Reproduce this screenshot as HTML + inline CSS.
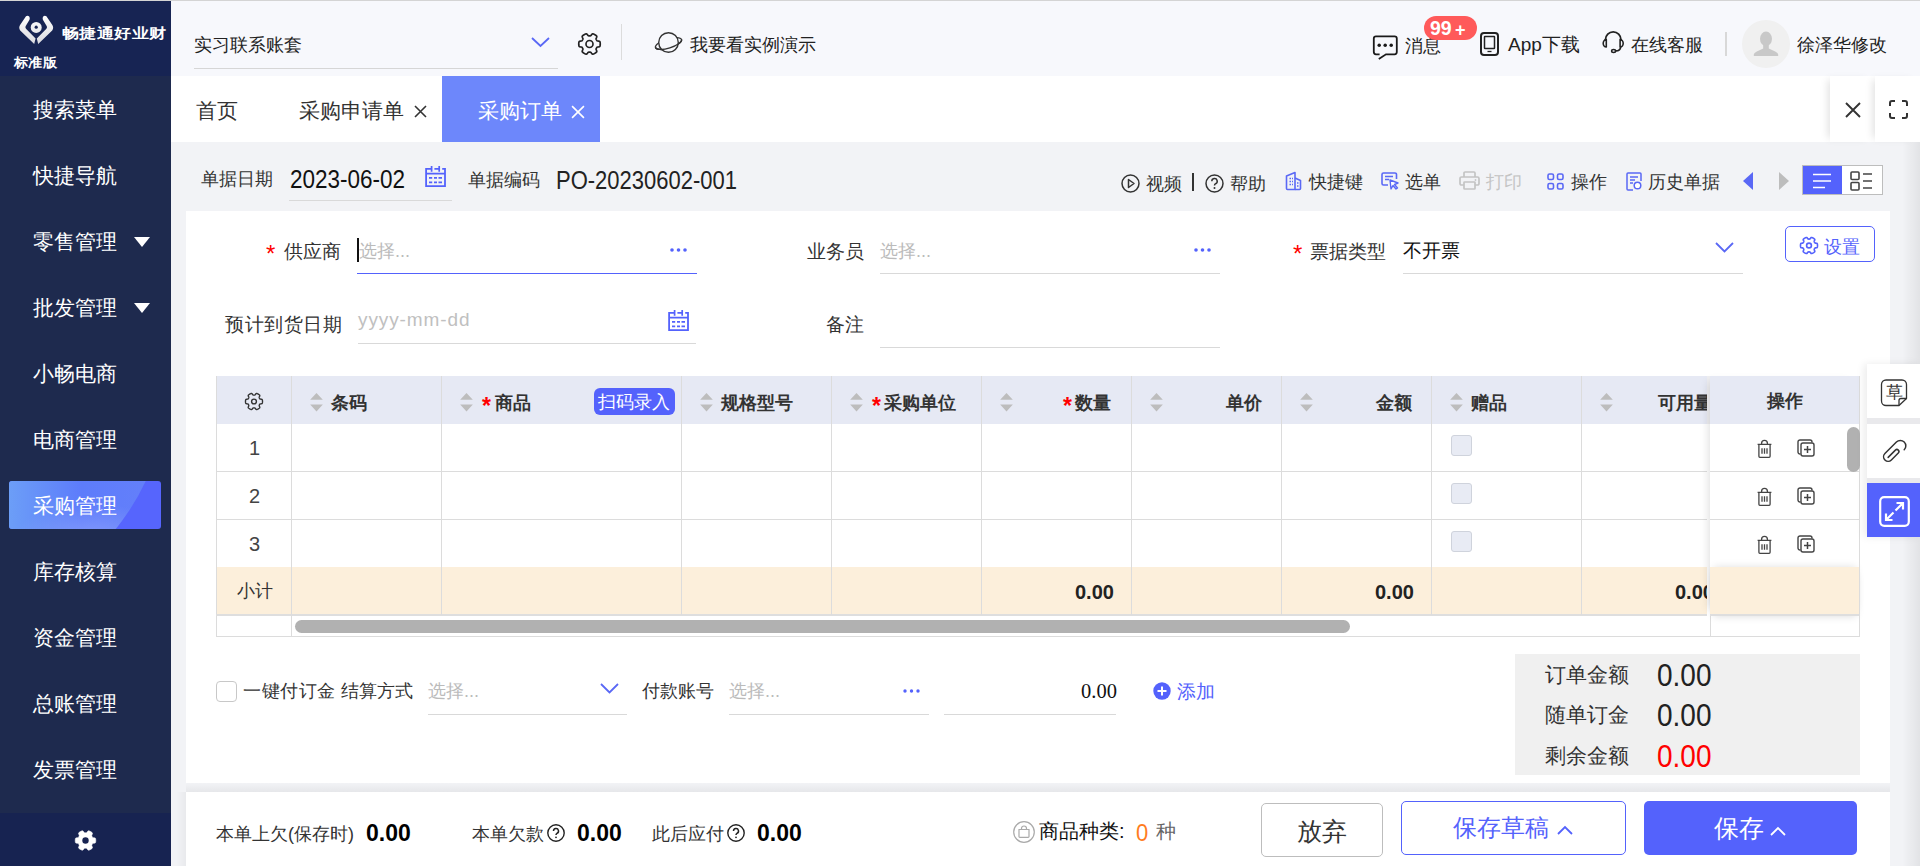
<!DOCTYPE html>
<html><head><meta charset="utf-8">
<style>
*{margin:0;padding:0;box-sizing:border-box}
html,body{width:1920px;height:866px;overflow:hidden}
body{position:relative;background:#f2f3f6;font-family:"Liberation Sans",sans-serif;color:#333}
.a{position:absolute;white-space:nowrap}
svg{display:block;overflow:visible}
/* sidebar */
#side{left:0;top:0;width:171px;height:866px;background:#1e2a4e}
#logo{left:0;top:1px;width:171px;height:75px;background:#172453}
#sidebot{left:0;top:813px;width:171px;height:53px;background:#172351}
.mi{left:33px;color:#fff;font-size:21px;line-height:30px}
.tri{width:0;height:0;border-left:8.5px solid transparent;border-right:8.5px solid transparent;border-top:10px solid #fff}
#act{left:9px;top:481px;width:152px;height:48px;border-radius:3px;overflow:hidden;background:#5665fd}
#actc{left:-313px;top:-336px;width:472px;height:472px;border-radius:50%;
 background:radial-gradient(ellipse 80px 40px at 395px 398px,rgba(150,168,250,.75),rgba(150,168,250,0)),linear-gradient(90deg,#6c9ef7 313px,#5d7cfb 385px,#6580fa 465px)}
/* header */
#hdr{left:171px;top:1px;width:1749px;height:75px;background:#f7f8fc}
.ht{font-size:18px;line-height:24px;color:#222}
/* tabs */
#tabs{left:171px;top:76px;width:1749px;height:66px;background:#fff}
.tab{font-size:21px;line-height:30px;color:#333}
/* toolbar */
.tb{font-size:18px;line-height:24px;color:#333}
/* card */
#card{left:186px;top:211px;width:1704px;height:572px;background:#fff}
.lbl{font-size:19px;line-height:26px;color:#333}
.ph{font-size:18px;line-height:26px;color:#bbb}
.ul{height:1px;background:#d9d9d9}
.req{color:#f00;font-size:23px;line-height:20px;font-weight:bold}
/* table */
.th{font-size:18px;line-height:24px;color:#333;font-weight:bold}
.vl{width:1px;background:#dcdcdc}
.hl{height:1px;background:#dcdcdc}
.sort{width:13px;height:19px}
.cb{width:21px;height:21px;border:1px solid #cfd3dc;border-radius:3px;background:#e8ebf4}
.num{font-size:20px;line-height:24px;font-weight:bold;color:#222}
/* footer */
#foot{left:186px;top:792px;width:1704px;height:74px;background:#fff}
.ft{font-size:18px;line-height:24px;color:#333}
.fv{font-size:23px;line-height:26px;margin-top:2px;font-weight:bold;color:#000;transform:scaleY(1.06);transform-origin:0 20px}
</style></head>
<body>
<svg width="0" height="0" style="position:absolute"><defs><path id="gearp" d="M24.65 13.00 L24.64 13.51 L24.60 14.02 L24.54 14.52 L24.45 15.02 L24.28 15.50 L23.85 15.91 L22.88 16.12 L21.82 16.21 L21.26 16.42 L20.98 16.72 L20.77 17.04 L20.58 17.38 L20.39 17.71 L20.21 18.05 L20.09 18.44 L20.19 19.03 L20.64 20.00 L20.94 20.94 L20.80 21.52 L20.47 21.91 L20.09 22.24 L19.68 22.54 L19.26 22.83 L18.83 23.09 L18.38 23.33 L17.92 23.56 L17.46 23.76 L16.98 23.93 L16.47 24.02 L15.91 23.85 L15.24 23.11 L14.63 22.25 L14.17 21.87 L13.77 21.77 L13.38 21.75 L13.00 21.75 L12.62 21.75 L12.23 21.77 L11.83 21.87 L11.37 22.25 L10.76 23.11 L10.09 23.85 L9.53 24.02 L9.02 23.93 L8.54 23.76 L8.08 23.56 L7.62 23.33 L7.18 23.09 L6.74 22.83 L6.32 22.54 L5.91 22.24 L5.53 21.91 L5.20 21.52 L5.06 20.94 L5.36 20.00 L5.81 19.03 L5.91 18.44 L5.79 18.05 L5.61 17.71 L5.42 17.38 L5.23 17.04 L5.02 16.72 L4.74 16.42 L4.18 16.21 L3.12 16.12 L2.15 15.91 L1.72 15.50 L1.55 15.02 L1.46 14.52 L1.40 14.02 L1.36 13.51 L1.35 13.00 L1.36 12.49 L1.40 11.98 L1.46 11.48 L1.55 10.98 L1.72 10.50 L2.15 10.09 L3.12 9.88 L4.18 9.79 L4.74 9.58 L5.02 9.28 L5.23 8.96 L5.42 8.62 L5.61 8.29 L5.79 7.95 L5.91 7.56 L5.81 6.97 L5.36 6.00 L5.06 5.06 L5.20 4.48 L5.53 4.09 L5.91 3.76 L6.32 3.46 L6.74 3.17 L7.17 2.91 L7.62 2.67 L8.08 2.44 L8.54 2.24 L9.02 2.07 L9.53 1.98 L10.09 2.15 L10.76 2.89 L11.37 3.75 L11.83 4.13 L12.23 4.23 L12.62 4.25 L13.00 4.25 L13.38 4.25 L13.77 4.23 L14.17 4.13 L14.63 3.75 L15.24 2.89 L15.91 2.15 L16.47 1.98 L16.98 2.07 L17.46 2.24 L17.92 2.44 L18.38 2.67 L18.82 2.91 L19.26 3.17 L19.68 3.46 L20.09 3.76 L20.47 4.09 L20.80 4.48 L20.94 5.06 L20.64 6.00 L20.19 6.97 L20.09 7.56 L20.21 7.95 L20.39 8.29 L20.58 8.63 L20.77 8.96 L20.98 9.28 L21.26 9.58 L21.82 9.79 L22.88 9.88 L23.85 10.09 L24.28 10.50 L24.45 10.98 L24.54 11.48 L24.60 11.98 L24.64 12.49Z"/></defs></svg>
<!-- ============ SIDEBAR ============ -->
<div id="side" class="a"></div>
<div id="logo" class="a"></div>
<div id="sidebot" class="a"></div>
<div class="a" style="left:0;top:0;width:1920px;height:1px;background:#d4d4d4;z-index:5"></div>
<!-- logo icon -->
<svg class="a" style="left:0;top:0" width="60" height="50" viewBox="0 0 60 50">
 <defs><linearGradient id="lg" x1="0" y1="15" x2="0" y2="45" gradientUnits="userSpaceOnUse"><stop offset="0" stop-color="#fff"/><stop offset="1" stop-color="#d9d9de"/></linearGradient></defs>
 <path d="M26 16.2 Q27.8 15 29.2 16.5 Q30.2 18 29.5 19.8 L25.6 26.2 Q25 27.6 26 28.8 L35.6 38.4 L34.2 44 L20.2 30.6 Q18.2 27.4 20.4 24.6 Z" fill="url(#lg)"/>
 <path d="M46.4 16.2 Q44.6 15 43.2 16.5 Q42.2 18 42.9 19.8 L46.8 26.2 Q47.4 27.6 46.4 28.8 L36.8 38.4 L38.2 44 L52.2 30.6 Q54.2 27.4 52 24.6 Z" fill="url(#lg)"/>
 <circle cx="36.2" cy="27.4" r="5.5" fill="url(#lg)"/>
 <circle cx="36.2" cy="27.2" r="1.6" fill="#172453"/>
</svg>
<div class="a" style="left:62px;top:24px;font-size:17.5px;line-height:22px;color:#fff;font-weight:bold;letter-spacing:-0.6px;transform:scaleY(0.82);transform-origin:0 0">畅捷通好业财</div>
<div class="a" style="left:14px;top:53px;font-size:14px;line-height:20px;color:#fff;font-weight:bold;letter-spacing:0.3px;transform:scaleY(0.92);transform-origin:0 0">标准版</div>

<div id="act" class="a"><div id="actc" class="a"></div></div>
<div class="a mi" style="top:95px">搜索菜单</div>
<div class="a mi" style="top:161px">快捷导航</div>
<div class="a mi" style="top:227px">零售管理</div>
<div class="a mi" style="top:293px">批发管理</div>
<div class="a mi" style="top:359px">小畅电商</div>
<div class="a mi" style="top:425px">电商管理</div>
<div class="a mi" style="top:491px">采购管理</div>
<div class="a mi" style="top:557px">库存核算</div>
<div class="a mi" style="top:623px">资金管理</div>
<div class="a mi" style="top:689px">总账管理</div>
<div class="a mi" style="top:755px">发票管理</div>
<div class="a tri" style="left:134px;top:237px"></div>
<div class="a tri" style="left:134px;top:303px"></div>
<!-- bottom gear -->
<svg class="a" style="left:74px;top:829px" width="23" height="23" viewBox="0 0 26 26">
 <use href="#gearp" fill="#fff" stroke="#fff" stroke-width="0.6"/>
 <circle cx="13" cy="13" r="3.6" fill="#172351"/>
</svg>

<!-- ============ HEADER ============ -->
<div id="hdr" class="a"></div>
<div class="a ht" style="left:194px;top:33px">实习联系账套</div>
<div class="a" style="left:194px;top:68px;width:364px;height:1px;background:#d6d6d6"></div>
<svg class="a" style="left:531px;top:37px" width="19" height="10" viewBox="0 0 19 10"><path d="M1 1 L9.5 9 L18 1" fill="none" stroke="#5a68f5" stroke-width="1.8"/></svg>
<svg class="a" style="left:577px;top:32px" width="25" height="24" viewBox="0 0 26 26">
 <use href="#gearp" fill="none" stroke="#222" stroke-width="1.8" stroke-linejoin="round"/>
 <circle cx="13" cy="13" r="3.8" fill="none" stroke="#222" stroke-width="1.8"/>
</svg>
<div class="a" style="left:621px;top:24px;width:1px;height:36px;background:#dcdcdc"></div>
<svg class="a" style="left:654px;top:31px" width="30" height="24" viewBox="0 0 30 24">
 <g transform="translate(14.5 12.5) rotate(-17)"><ellipse cx="0" cy="0" rx="13.6" ry="4.6" fill="none" stroke="#333" stroke-width="1.4"/></g>
 <circle cx="14.5" cy="11.5" r="9.8" fill="#f7f8fc" stroke="#333" stroke-width="1.4"/>
 <g transform="translate(14.5 12.5) rotate(-17)"><path d="M-13.6 0 A13.6 4.6 0 0 0 13.6 0" fill="none" stroke="#333" stroke-width="1.4"/></g>
</svg>
<div class="a ht" style="left:690px;top:33px">我要看实例演示</div>

<!-- message -->
<svg class="a" style="left:1368px;top:30px" width="34" height="34" viewBox="1368 30 34 34">
 <path d="M1379.6 54.3 H1376 a2.2 2.2 0 0 1 -2.2 -2.2 V38.5 a2.2 2.2 0 0 1 2.2 -2.2 H1394.6 a2.2 2.2 0 0 1 2.2 2.2 V52.1 a2.2 2.2 0 0 1 -2.2 2.2 H1386 L1378.8 59" fill="none" stroke="#1a1a1a" stroke-width="1.8"/>
 <circle cx="1379.2" cy="45.3" r="1.75" fill="#1a1a1a"/><circle cx="1385.2" cy="45.3" r="1.75" fill="#1a1a1a"/><circle cx="1391.2" cy="45.3" r="1.75" fill="#1a1a1a"/>
</svg>
<div class="a ht" style="left:1405px;top:34px">消息</div>
<div class="a" style="left:1424px;top:16px;width:53px;height:24px;border-radius:12px;background:#ff5a5a"></div><div class="a" style="left:1430px;top:16px;color:#fff;font-size:19.5px;line-height:24px;font-weight:bold">99</div><div class="a" style="left:1455px;top:17.5px;color:#fff;font-size:18px;line-height:24px;font-weight:bold">+</div>
<svg class="a" style="left:1480px;top:32px" width="19" height="24" viewBox="0 0 19 24">
 <rect x="1" y="1" width="17" height="22" rx="3" fill="none" stroke="#222" stroke-width="2"/>
 <rect x="4.5" y="4.5" width="10" height="12" rx="0.5" fill="none" stroke="#222" stroke-width="1.5"/>
 <line x1="7.5" y1="19.5" x2="11.5" y2="19.5" stroke="#222" stroke-width="1.3"/>
</svg>
<div class="a ht" style="left:1508px;top:33px;font-size:19px">App下载</div>
<svg class="a" style="left:1598px;top:28px" width="30" height="30" viewBox="1598 28 30 30">
 <path d="M1605.5 41 V39.6 A7.7 7.7 0 0 1 1620.9 39.6 V41" fill="none" stroke="#222" stroke-width="1.8"/>
 <path d="M1606.3 39.6 A3.1 3.7 0 0 0 1606.3 47 Z" fill="none" stroke="#222" stroke-width="1.6" stroke-linejoin="round"/>
 <path d="M1620.1 39.6 A3.1 3.7 0 0 1 1620.1 47 Z" fill="none" stroke="#222" stroke-width="1.6" stroke-linejoin="round"/>
 <path d="M1620.6 47 C1620.6 49.6 1618.6 50.9 1615.6 50.9" fill="none" stroke="#222" stroke-width="1.6"/>
 <ellipse cx="1613.6" cy="50.9" rx="2" ry="1.5" fill="none" stroke="#222" stroke-width="1.5"/>
</svg>
<div class="a ht" style="left:1631px;top:33px">在线客服</div>
<div class="a" style="left:1725px;top:32px;width:2px;height:24px;background:#d8d8d8"></div>
<svg class="a" style="left:1742px;top:20px" width="48" height="48" viewBox="0 0 48 48"><circle cx="24" cy="24" r="24" fill="#f0f0f0"/>
 <ellipse cx="24" cy="18.8" rx="6" ry="7.2" fill="#c8c8c8"/>
 <path d="M21.2 24 V28.6 L14.8 31.6 Q11.8 33 11.8 34.6 V36 H36.2 V34.6 Q36.2 33 33.2 31.6 L26.8 28.6 V24 Z" fill="#c8c8c8"/>
</svg>
<div class="a ht" style="left:1797px;top:33px">徐泽华修改</div>

<!-- ============ TABS ============ -->
<div id="tabs" class="a"></div>
<div class="a tab" style="left:196px;top:96px">首页</div>
<div class="a tab" style="left:299px;top:96px">采购申请单</div>
<svg class="a" style="left:414px;top:105px" width="13" height="13" viewBox="0 0 13 13"><path d="M1 1 L12 12 M12 1 L1 12" stroke="#333" stroke-width="1.6"/></svg>
<div class="a" style="left:442px;top:76px;width:158px;height:66px;background:#6d87fb"></div>
<div class="a tab" style="left:478px;top:96px;color:#fff">采购订单</div>
<svg class="a" style="left:571px;top:105px" width="14" height="14" viewBox="0 0 13 13"><path d="M1 1 L12 12 M12 1 L1 12" stroke="#fff" stroke-width="1.5"/></svg>
<div class="a" style="left:1830px;top:76px;width:45px;height:66px;background:#fff;box-shadow:-6px 0 8px -4px rgba(0,0,0,.12)"></div>
<div class="a" style="left:1875px;top:76px;width:45px;height:66px;background:#fff;box-shadow:-6px 0 8px -4px rgba(0,0,0,.12)"></div>
<svg class="a" style="left:1845px;top:102px" width="16" height="16" viewBox="0 0 16 16"><path d="M1 1 L15 15 M15 1 L1 15" stroke="#333" stroke-width="1.9"/></svg>
<svg class="a" style="left:1889px;top:100px" width="19" height="19" viewBox="0 0 19 19"><path d="M1 6 V3 a2 2 0 0 1 2 -2 H6 M13 1 H16 a2 2 0 0 1 2 2 V6 M18 13 V16 a2 2 0 0 1 -2 2 H13 M6 18 H3 a2 2 0 0 1 -2 -2 V13" fill="none" stroke="#333" stroke-width="2"/></svg>

<!-- ============ TOOLBAR ============ -->
<div class="a tb" style="left:201px;top:167px">单据日期</div>
<div class="a" style="left:290px;top:168px;font-size:22.5px;line-height:26px;color:#111;transform:scaleY(1.13);transform-origin:0 19px">2023-06-02</div>
<div class="a" style="left:289px;top:200px;width:163px;height:1px;background:#d9d9d9"></div>
<svg class="a" style="left:420px;top:160px" width="32" height="32" viewBox="0 0 32 32"><g fill="none" stroke="#5462fc">
 <path d="M11.6 8.9 H6.1 V26.1 H25 V8.9 H22.2 M14.4 8.9 H19.2 M6.1 13.7 H25" stroke-width="1.8"/>
 <path d="M11.6 6.1 V11.8 M19.2 6.1 V11.8" stroke-width="1.7"/>
 <path d="M9 17.9 H12.2 M14 17.9 H17 M18.5 17.9 H22 M9 22.4 H12.2 M14 22.4 H17 M18.5 22.4 H22" stroke-width="1.7"/>
</g></svg>
<div class="a tb" style="left:468px;top:168px">单据编码</div>
<div class="a" style="left:556px;top:169px;font-size:22px;line-height:26px;color:#222;transform:scaleY(1.13);transform-origin:0 19px">PO-20230602-001</div>

<!-- right toolbar -->
<svg class="a" style="left:1121px;top:174px" width="19" height="19" viewBox="0 0 19 19"><circle cx="9.5" cy="9.5" r="8.5" fill="none" stroke="#333" stroke-width="1.5"/><path d="M7.5 5.5 L13 9.5 L7.5 13.5Z" fill="none" stroke="#333" stroke-width="1.5" stroke-linejoin="round"/></svg>
<div class="a tb" style="left:1146px;top:172px">视频</div>
<div class="a" style="left:1192px;top:173px;width:2px;height:18px;background:#333"></div>
<svg class="a" style="left:1205px;top:174px" width="19" height="19" viewBox="0 0 19 19"><circle cx="9.5" cy="9.5" r="8.5" fill="none" stroke="#333" stroke-width="1.5"/><path d="M6.8 7.3 a2.7 2.7 0 1 1 3.8 2.4 C9.8 10.1 9.5 10.6 9.5 11.6" fill="none" stroke="#333" stroke-width="1.5"/><circle cx="9.5" cy="14" r="1" fill="#333"/></svg>
<div class="a tb" style="left:1230px;top:172px">帮助</div>
<svg class="a" style="left:1285px;top:171px" width="17" height="20" viewBox="0 0 17 20">
 <path d="M1.5 5 L10 1.5 V18.5 H2.5 a1 1 0 0 1 -1 -1Z" fill="none" stroke="#5a68f5" stroke-width="1.6" stroke-linejoin="round"/>
 <path d="M10 7 L15.5 9.5 V17.5 a1 1 0 0 1 -1 1 H10" fill="none" stroke="#5a68f5" stroke-width="1.6" stroke-linejoin="round"/>
 <path d="M4.5 7.5 h1.5 M7 7.5 h1 M4.5 10.5 h1.5 M7 10.5 h1 M4.5 13.5 h1.5 M7 13.5 h1 M12 12 h1.5 M12 15 h1.5" stroke="#5a68f5" stroke-width="1.5"/>
</svg>
<div class="a tb" style="left:1309px;top:170px">快捷键</div>
<svg class="a" style="left:1381px;top:172px" width="18" height="18" viewBox="0 0 18 18">
 <path d="M7 13 H2.5 a1.5 1.5 0 0 1 -1.5 -1.5 V2.5 A1.5 1.5 0 0 1 2.5 1 H14 a1.5 1.5 0 0 1 1.5 1.5 V7" fill="none" stroke="#5a68f5" stroke-width="1.6"/>
 <path d="M4 4.5 H12 M4 7.5 H8" stroke="#5a68f5" stroke-width="1.5"/>
 <path d="M9 8 L17 11 L13.5 12.5 L16.5 16 L15 17 L12 13.5 L10 17Z" fill="#fff" stroke="#5a68f5" stroke-width="1.4" stroke-linejoin="round"/>
</svg>
<div class="a tb" style="left:1405px;top:170px">选单</div>
<svg class="a" style="left:1459px;top:171px" width="21" height="19" viewBox="0 0 21 19">
 <path d="M5 6 V2 a1 1 0 0 1 1 -1 H15 a1 1 0 0 1 1 1 V6" fill="none" stroke="#c4c4c4" stroke-width="1.7"/>
 <path d="M5 14 H2.5 a1.5 1.5 0 0 1 -1.5 -1.5 V7.5 A1.5 1.5 0 0 1 2.5 6 H18.5 A1.5 1.5 0 0 1 20 7.5 V12.5 A1.5 1.5 0 0 1 18.5 14 H16" fill="none" stroke="#c4c4c4" stroke-width="1.7"/>
 <rect x="5" y="11" width="11" height="7" rx="0.5" fill="none" stroke="#c4c4c4" stroke-width="1.7"/>
 <circle cx="16.5" cy="9" r="0.9" fill="#c4c4c4"/>
</svg>
<div class="a tb" style="left:1486px;top:170px;color:#c4c4c4">打印</div>
<svg class="a" style="left:1547px;top:173px" width="17" height="17" viewBox="0 0 17 17">
 <rect x="1" y="1" width="5.5" height="5.5" rx="1.5" fill="none" stroke="#5a68f5" stroke-width="1.6"/>
 <rect x="10.5" y="1" width="5.5" height="5.5" rx="1.5" fill="none" stroke="#5a68f5" stroke-width="1.6"/>
 <rect x="1" y="10.5" width="5.5" height="5.5" rx="1.5" fill="none" stroke="#5a68f5" stroke-width="1.6"/>
 <rect x="10.5" y="10.5" width="5.5" height="5.5" rx="1.5" fill="none" stroke="#5a68f5" stroke-width="1.6"/>
</svg>
<div class="a tb" style="left:1571px;top:170px">操作</div>
<svg class="a" style="left:1626px;top:172px" width="16" height="19" viewBox="0 0 16 19">
 <path d="M7 18 H2 a1 1 0 0 1 -1 -1 V2 a1 1 0 0 1 1 -1 H14 a1 1 0 0 1 1 1 V9" fill="none" stroke="#5a68f5" stroke-width="1.5"/>
 <path d="M4 5 H12 M4 8 H9 M4 11 H7" stroke="#5a68f5" stroke-width="1.5"/>
 <circle cx="11.5" cy="13.5" r="3.3" fill="#fff" stroke="#5a68f5" stroke-width="1.5"/>
</svg>
<div class="a tb" style="left:1648px;top:170px">历史单据</div>
<div class="a" style="left:1743px;top:172px;width:0;height:0;border-top:9px solid transparent;border-bottom:9px solid transparent;border-right:10px solid #5a68f5"></div>
<div class="a" style="left:1779px;top:172px;width:0;height:0;border-top:9px solid transparent;border-bottom:9px solid transparent;border-left:10px solid #bdbdbd"></div>
<div class="a" style="left:1802px;top:165px;width:81px;height:30px;border:1px solid #bdbdbd;background:#fff"></div>
<div class="a" style="left:1803px;top:166px;width:39px;height:28px;background:#5462fc"></div>
<svg class="a" style="left:1812px;top:173px" width="20" height="16" viewBox="0 0 20 16"><path d="M1 1.5 H19 M1 8 H19 M1 14.5 H13" stroke="#fff" stroke-width="1.6"/></svg>
<svg class="a" style="left:1850px;top:171px" width="24" height="20" viewBox="0 0 24 20">
 <rect x="1" y="1" width="8" height="7.5" rx="1" fill="none" stroke="#444" stroke-width="1.6"/>
 <rect x="1" y="11.5" width="8" height="7.5" rx="1" fill="none" stroke="#444" stroke-width="1.6"/>
 <path d="M13 3 H22 M13 10 H22 M13 17 H22" stroke="#444" stroke-width="1.6"/>
</svg>

<!-- right gray strip shadow -->
<div class="a" style="left:1902px;top:142px;width:18px;height:724px;background:linear-gradient(90deg,rgba(0,0,0,0),rgba(0,0,0,.065))"></div>

<!-- ============ CARD ============ -->
<div id="card" class="a"></div>

<!-- row1 -->
<div class="a req" style="left:266px;top:244px;font-weight:normal;font-size:24px">*</div>
<div class="a lbl" style="left:284px;top:239px">供应商</div>
<div class="a" style="left:357px;top:238px;width:2px;height:24px;background:#111"></div>
<div class="a ph" style="left:359px;top:238px">选择...</div>
<div class="a" style="left:357px;top:273px;width:340px;height:1px;background:#5462fc"></div>
<svg class="a" style="left:670px;top:248px" width="17" height="4" viewBox="0 0 17 4"><circle cx="2" cy="2" r="1.8" fill="#5462fc"/><circle cx="8.5" cy="2" r="1.8" fill="#5462fc"/><circle cx="15" cy="2" r="1.8" fill="#5462fc"/></svg>

<div class="a lbl" style="left:807px;top:239px">业务员</div>
<div class="a ph" style="left:880px;top:238px">选择...</div>
<div class="a ul" style="left:880px;top:273px;width:340px"></div>
<svg class="a" style="left:1194px;top:248px" width="17" height="4" viewBox="0 0 17 4"><circle cx="2" cy="2" r="1.8" fill="#5462fc"/><circle cx="8.5" cy="2" r="1.8" fill="#5462fc"/><circle cx="15" cy="2" r="1.8" fill="#5462fc"/></svg>

<div class="a req" style="left:1293px;top:244px;font-weight:normal;font-size:24px">*</div>
<div class="a lbl" style="left:1310px;top:239px">票据类型</div>
<div class="a lbl" style="left:1403px;top:238px;color:#111">不开票</div>
<div class="a ul" style="left:1403px;top:273px;width:340px"></div>
<svg class="a" style="left:1715px;top:242px" width="19" height="11" viewBox="0 0 19 11"><path d="M1 1 L9.5 9.5 L18 1" fill="none" stroke="#5a68f5" stroke-width="1.8"/></svg>

<div class="a" style="left:1785px;top:226px;width:90px;height:36px;border:1.5px solid #5462fc;border-radius:5px"></div>
<svg class="a" style="left:1799px;top:236px" width="20" height="19" viewBox="0 0 26 26">
 <use href="#gearp" fill="none" stroke="#5462fc" stroke-width="2.2" stroke-linejoin="round"/>
 <circle cx="13" cy="13" r="3.3" fill="none" stroke="#5462fc" stroke-width="2.2"/>
</svg>
<div class="a tb" style="left:1824px;top:235px;color:#5462fc">设置</div>

<!-- row2 -->
<div class="a lbl" style="left:225px;top:312px;letter-spacing:0.6px">预计到货日期</div>
<div class="a" style="left:358px;top:307px;font-size:19px;line-height:26px;color:#c0c0c0;letter-spacing:0.9px">yyyy-mm-dd</div>
<div class="a ul" style="left:358px;top:343px;width:338px"></div>
<svg class="a" style="left:663px;top:303.5px" width="32" height="32" viewBox="0 0 32 32"><g fill="none" stroke="#5462fc">
 <path d="M11.6 8.9 H6.1 V26.1 H25 V8.9 H22.2 M14.4 8.9 H19.2 M6.1 13.7 H25" stroke-width="1.8"/>
 <path d="M11.6 6.1 V11.8 M19.2 6.1 V11.8" stroke-width="1.7"/>
 <path d="M9 17.9 H12.2 M14 17.9 H17 M18.5 17.9 H22 M9 22.4 H12.2 M14 22.4 H17 M18.5 22.4 H22" stroke-width="1.7"/>
</g></svg>
<div class="a lbl" style="left:826px;top:312px">备注</div>
<div class="a ul" style="left:880px;top:347px;width:340px"></div>

<!-- ============ TABLE ============ -->
<div id="tbl" class="a" style="left:216px;top:376px;width:1644px;height:261px">
 <div class="a" style="left:0;top:0;width:1491px;height:48px;background:#e6e9f4"></div>
 <div class="a" style="left:0;top:191px;width:1491px;height:47px;background:#fcefdb"></div>
</div>
<!-- borders -->
<div class="a vl" style="left:216px;top:376px;height:261px"></div>
<div class="a hl" style="left:216px;top:471px;width:1491px"></div>
<div class="a hl" style="left:216px;top:519px;width:1491px"></div>
<div class="a hl" style="left:216px;top:614px;width:1491px;height:2px;background:#dedede"></div>
<div class="a hl" style="left:216px;top:636px;width:1644px"></div>
<div class="a vl" style="left:291px;top:376px;height:261px"></div>
<div class="a vl" style="left:441px;top:376px;height:239px"></div>
<div class="a vl" style="left:681px;top:376px;height:239px"></div>
<div class="a vl" style="left:831px;top:376px;height:239px"></div>
<div class="a vl" style="left:981px;top:376px;height:239px"></div>
<div class="a vl" style="left:1131px;top:376px;height:239px"></div>
<div class="a vl" style="left:1281px;top:376px;height:239px"></div>
<div class="a vl" style="left:1431px;top:376px;height:239px"></div>
<div class="a vl" style="left:1581px;top:376px;height:239px"></div>

<!-- header contents -->
<svg class="a" style="left:244px;top:392px" width="20" height="19" viewBox="0 0 26 26">
 <use href="#gearp" fill="none" stroke="#333" stroke-width="1.9" stroke-linejoin="round"/>
 <circle cx="13" cy="13" r="3.3" fill="none" stroke="#333" stroke-width="1.9"/>
</svg>
<!-- sort arrows -->
<svg width="0" height="0" style="position:absolute"><defs><g id="srt"><path d="M0 6.5 L6 0 L12 6.5Z M0 11 L6 17.5 L12 11Z" fill="#bdbdbd"/></g></defs></svg>
<svg class="a sort" style="left:309.5px;top:392.5px" viewBox="0 0 12 18"><use href="#srt"/></svg>
<svg class="a sort" style="left:459.5px;top:392.5px" viewBox="0 0 12 18"><use href="#srt"/></svg>
<svg class="a sort" style="left:699.5px;top:392.5px" viewBox="0 0 12 18"><use href="#srt"/></svg>
<svg class="a sort" style="left:849.5px;top:392.5px" viewBox="0 0 12 18"><use href="#srt"/></svg>
<svg class="a sort" style="left:999.5px;top:392.5px" viewBox="0 0 12 18"><use href="#srt"/></svg>
<svg class="a sort" style="left:1149.5px;top:392.5px" viewBox="0 0 12 18"><use href="#srt"/></svg>
<svg class="a sort" style="left:1299.5px;top:392.5px" viewBox="0 0 12 18"><use href="#srt"/></svg>
<svg class="a sort" style="left:1449.5px;top:392.5px" viewBox="0 0 12 18"><use href="#srt"/></svg>
<svg class="a sort" style="left:1599.5px;top:392.5px" viewBox="0 0 12 18"><use href="#srt"/></svg>

<div class="a th" style="left:331px;top:391px">条码</div>
<div class="a req" style="left:482px;top:396px">*</div>
<div class="a th" style="left:495px;top:391px">商品</div>
<div class="a" style="left:594px;top:388px;width:81px;height:27px;border-radius:6px;background:#5462fc"></div>
<div class="a" style="left:598px;top:390px;font-size:18px;line-height:24px;color:#fff">扫码录入</div>
<div class="a th" style="left:721px;top:391px">规格型号</div>
<div class="a req" style="left:872px;top:396px">*</div>
<div class="a th" style="left:884px;top:391px">采购单位</div>
<div class="a req" style="left:1063px;top:396px">*</div>
<div class="a th" style="left:1075px;top:391px">数量</div>
<div class="a th" style="left:1226px;top:391px">单价</div>
<div class="a th" style="left:1376px;top:391px">金额</div>
<div class="a th" style="left:1471px;top:391px">赠品</div>
<div class="a" style="left:1582px;top:377px;width:125px;height:46px;overflow:hidden"><div class="a th" style="left:76px;top:14px">可用量</div></div>

<!-- rows -->
<div class="a" style="left:249px;top:436px;font-size:20px;line-height:24px;color:#444">1</div>
<div class="a" style="left:249px;top:484px;font-size:20px;line-height:24px;color:#444">2</div>
<div class="a" style="left:249px;top:532px;font-size:20px;line-height:24px;color:#444">3</div>
<div class="a cb" style="left:1451px;top:435px"></div>
<div class="a cb" style="left:1451px;top:483px"></div>
<div class="a cb" style="left:1451px;top:531px"></div>
<div class="a" style="left:237px;top:579px;font-size:18px;line-height:24px;color:#333">小计</div>
<div class="a num" style="left:1075px;top:580px">0.00</div>
<div class="a num" style="left:1375px;top:580px">0.00</div>
<div class="a" style="left:1582px;top:568px;width:125px;height:46px;overflow:hidden"><div class="a num" style="left:93px;top:12px">0.00</div></div>
<!-- horizontal scrollbar -->
<div class="a" style="left:295px;top:620px;width:1055px;height:13px;border-radius:7px;background:#b1b1b1"></div>

<!-- fixed op column -->
<div class="a" style="left:1707px;top:376px;width:3px;height:48px;background:#eeeef1"></div>
<div class="a" style="left:1710px;top:376px;width:150px;height:239px;box-shadow:-7px 0 9px -6px rgba(0,0,0,.14)"></div>
<div class="a" style="left:1710px;top:376px;width:150px;height:261px">
 <div class="a" style="left:0;top:0;width:150px;height:48px;background:#e6e9f4"></div>
 <div class="a" style="left:0;top:48px;width:150px;height:191px;background:#fff"></div>
 <div class="a" style="left:0;top:95px;width:150px;height:1px;background:#dcdcdc"></div>
 <div class="a" style="left:0;top:143px;width:150px;height:1px;background:#dcdcdc"></div>
 <div class="a" style="left:0;top:239px;width:150px;height:22px;background:#fff;border-top:1px solid #dcdcdc;border-left:1px solid #dcdcdc"></div>
 <div class="a" style="left:0;top:191px;width:150px;height:48px;background:#fcefdb;box-shadow:0 -4px 8px -4px rgba(0,0,0,.12),0 5px 8px -4px rgba(0,0,0,.15)"></div>
 <div class="a" style="left:0;top:238px;width:150px;height:2px;background:#dedede"></div>
 <div class="a" style="left:149px;top:0;width:1px;height:261px;background:#dcdcdc"></div>
 <div class="a" style="left:0;top:260px;width:150px;height:1px;background:#dcdcdc"></div>
</div>
<div class="a th" style="left:1767px;top:389px">操作</div>
<div class="a" style="left:1847px;top:427px;width:13px;height:45px;border-radius:7px;background:#b1b1b1"></div>
<svg width="0" height="0" style="position:absolute"><defs>
 <g id="trash"><path d="M0.6 4.3 H14.4 M4.6 4.3 V3.3 a2.9 2.9 0 0 1 5.8 0 V4.3 M1.9 4.3 V16.3 a1 1 0 0 0 1 1 H12.1 a1 1 0 0 0 1 -1 V4.3 M5 8.2 V13.8 M7.5 8.2 V13.8 M10 8.2 V13.8" fill="none" stroke="#444" stroke-width="1.3"/></g>
 <g id="copy"><path d="M3.5 15 H3 a2 2 0 0 1 -2 -2 V3 a2 2 0 0 1 2 -2 H13 a2 2 0 0 1 2 2 V3.5" fill="none" stroke="#444" stroke-width="1.4"/><rect x="4" y="4" width="13" height="13" rx="2" fill="#fff" stroke="#444" stroke-width="1.4"/><path d="M10.5 7 V14 M7 10.5 H14" stroke="#444" stroke-width="1.5"/></g>
</defs></svg>
<svg class="a" style="left:1757px;top:440px" width="15" height="18" viewBox="0 0 15 18"><use href="#trash"/></svg>
<svg class="a" style="left:1797px;top:439px" width="18" height="18" viewBox="0 0 18 18"><use href="#copy"/></svg>
<svg class="a" style="left:1757px;top:488px" width="15" height="18" viewBox="0 0 15 18"><use href="#trash"/></svg>
<svg class="a" style="left:1797px;top:487px" width="18" height="18" viewBox="0 0 18 18"><use href="#copy"/></svg>
<svg class="a" style="left:1757px;top:536px" width="15" height="18" viewBox="0 0 15 18"><use href="#trash"/></svg>
<svg class="a" style="left:1797px;top:535px" width="18" height="18" viewBox="0 0 18 18"><use href="#copy"/></svg>

<!-- ============ BOTTOM FORM ============ -->
<div class="a" style="left:216px;top:681px;width:21px;height:21px;border:1px solid #c8c8c8;border-radius:4px;background:#fff"></div>
<div class="a tb" style="left:243px;top:679px;letter-spacing:0.5px">一键付订金</div>
<div class="a tb" style="left:341px;top:679px">结算方式</div>
<div class="a ph" style="left:428px;top:678px">选择...</div>
<div class="a ul" style="left:428px;top:714px;width:199px"></div>
<svg class="a" style="left:600px;top:683px" width="19" height="11" viewBox="0 0 19 11"><path d="M1 1 L9.5 9.5 L18 1" fill="none" stroke="#5a68f5" stroke-width="1.8"/></svg>
<div class="a tb" style="left:642px;top:679px">付款账号</div>
<div class="a ph" style="left:729px;top:678px">选择...</div>
<div class="a ul" style="left:729px;top:714px;width:200px"></div>
<svg class="a" style="left:903px;top:689px" width="17" height="4" viewBox="0 0 17 4"><circle cx="2" cy="2" r="1.7" fill="#5462fc"/><circle cx="8.5" cy="2" r="1.7" fill="#5462fc"/><circle cx="15" cy="2" r="1.7" fill="#5462fc"/></svg>
<div class="a" style="left:1081px;top:679px;font-family:'Liberation Serif',serif;font-size:20.5px;line-height:24px;color:#111">0.00</div>
<div class="a ul" style="left:944px;top:714px;width:172px"></div>
<svg class="a" style="left:1153px;top:682px" width="18" height="18" viewBox="0 0 18 18"><circle cx="9" cy="9" r="8.7" fill="#5462fc"/><path d="M9 4.5 V13.5 M4.5 9 H13.5" stroke="#fff" stroke-width="2"/></svg>
<div class="a tb" style="left:1177px;top:680px;color:#5462fc;font-size:19px">添加</div>

<!-- summary -->
<div class="a" style="left:1515px;top:654px;width:345px;height:121px;background:#f0f0f0"></div>
<div class="a" style="left:1545px;top:661px;font-size:21px;line-height:28px;color:#333">订单金额</div>
<div class="a" style="left:1545px;top:701px;font-size:21px;line-height:28px;color:#333">随单订金</div>
<div class="a" style="left:1545px;top:742px;font-size:21px;line-height:28px;color:#333">剩余金额</div>
<div class="a" style="left:1657px;top:660px;font-size:28px;line-height:34px;transform:scaleY(1.12);transform-origin:0 25px;color:#222">0.00</div>
<div class="a" style="left:1657px;top:700px;font-size:28px;line-height:34px;transform:scaleY(1.12);transform-origin:0 25px;color:#222">0.00</div>
<div class="a" style="left:1657px;top:741px;font-size:28px;line-height:34px;transform:scaleY(1.12);transform-origin:0 25px;color:#f00">0.00</div>

<!-- ============ FOOTER ============ -->
<div class="a" style="left:186px;top:783px;width:1704px;height:9px;background:linear-gradient(#f2f3f6,#e6e7ea)"></div>
<div id="foot" class="a"></div>
<div class="a" style="left:176px;top:792px;width:10px;height:74px;background:linear-gradient(90deg,rgba(0,0,0,0),rgba(0,0,0,.04))"></div>
<div class="a ft" style="left:216px;top:822px">本单上欠(保存时)</div>
<div class="a fv" style="left:366px;top:818px">0.00</div>
<div class="a ft" style="left:472px;top:822px">本单欠款</div>
<svg class="a" style="left:547px;top:824px" width="18" height="18" viewBox="0 0 18 18"><circle cx="9" cy="9" r="8.2" fill="none" stroke="#222" stroke-width="1.4"/><path d="M6.5 7 a2.5 2.5 0 1 1 3.5 2.3 C9.4 9.6 9 10 9 11" fill="none" stroke="#222" stroke-width="1.5"/><circle cx="9" cy="13.3" r="0.9" fill="#222"/></svg>
<div class="a fv" style="left:577px;top:818px">0.00</div>
<div class="a ft" style="left:652px;top:822px">此后应付</div>
<svg class="a" style="left:727px;top:824px" width="18" height="18" viewBox="0 0 18 18"><circle cx="9" cy="9" r="8.2" fill="none" stroke="#222" stroke-width="1.4"/><path d="M6.5 7 a2.5 2.5 0 1 1 3.5 2.3 C9.4 9.6 9 10 9 11" fill="none" stroke="#222" stroke-width="1.5"/><circle cx="9" cy="13.3" r="0.9" fill="#222"/></svg>
<div class="a fv" style="left:757px;top:818px">0.00</div>

<svg class="a" style="left:1013px;top:821px" width="22" height="22" viewBox="0 0 22 22"><circle cx="11" cy="11" r="10.3" fill="none" stroke="#aaa" stroke-width="1.2"/><path d="M6 8.5 H16 V15.5 a0.8 0.8 0 0 1 -0.8 0.8 H6.8 a0.8 0.8 0 0 1 -0.8 -0.8Z M8.5 8.5 V7.5 a2.5 2.5 0 0 1 5 0 V8.5" fill="none" stroke="#aaa" stroke-width="1.2"/></svg>
<div class="a" style="left:1039px;top:818px;font-size:20px;line-height:26px;color:#111">商品种类:</div>
<div class="a" style="left:1136px;top:821px;font-size:22px;line-height:26px;color:#ff7d1f;transform:scaleY(1.12);transform-origin:0 20px">0</div>
<div class="a" style="left:1156px;top:818px;font-size:20px;line-height:26px;color:#666">种</div>

<div class="a" style="left:1261px;top:803px;width:122px;height:54px;border:1px solid #bdbdbd;border-radius:5px;background:#fff"></div>
<div class="a" style="left:1297px;top:815px;font-size:25px;line-height:32px;color:#333">放弃</div>
<div class="a" style="left:1401px;top:801px;width:225px;height:54px;border:1.5px solid #5462fc;border-radius:5px;background:#fff"></div>
<div class="a" style="left:1453px;top:812px;font-size:24px;line-height:32px;color:#5462fc">保存草稿</div>
<svg class="a" style="left:1557px;top:825px" width="16" height="10" viewBox="0 0 16 10"><path d="M1 9 L8 2 L15 9" fill="none" stroke="#5462fc" stroke-width="1.8"/></svg>
<div class="a" style="left:1644px;top:801px;width:213px;height:54px;border-radius:5px;background:#5462fc"></div>
<div class="a" style="left:1714px;top:812px;font-size:25px;line-height:32px;color:#fff">保存</div>
<svg class="a" style="left:1770px;top:826px" width="16" height="10" viewBox="0 0 16 10"><path d="M1 9 L8 2 L15 9" fill="none" stroke="#fff" stroke-width="1.8"/></svg>

<!-- ============ RIGHT FLOAT PANEL ============ -->
<div class="a" style="left:1867px;top:364px;width:53px;height:173px;background:#e9e9ec;box-shadow:-3px 0 8px rgba(0,0,0,.08)"></div>
<div class="a" style="left:1867px;top:364px;width:53px;height:54px;background:#fff"></div>
<div class="a" style="left:1867px;top:424px;width:53px;height:54px;background:#fff"></div>
<div class="a" style="left:1867px;top:483px;width:53px;height:54px;background:#5462fc"></div>
<svg class="a" style="left:1860px;top:370px" width="60" height="100" viewBox="1860 370 60 100">
 <path d="M1886 380 H1902 a4.5 4.5 0 0 1 4.5 4.5 V398.5 L1899 405.5 H1886 a4.5 4.5 0 0 1 -4.5 -4.5 V384.5 a4.5 4.5 0 0 1 4.5 -4.5Z" fill="#fff" stroke="#333" stroke-width="1.3" stroke-linejoin="round"/>
 <path d="M1906.5 398.5 H1901 a2 2 0 0 0 -2 2 V405.5" fill="none" stroke="#333" stroke-width="1.3"/>
 <text x="1894" y="398" font-size="16.5" text-anchor="middle" fill="#333">草</text>
 <path transform="translate(1885.6 460.6) rotate(45)" d="M5.5 -20.8 A5.5 5.5 0 0 0 -5.5 -20.8 L-5.5 -4.55 A4.55 4.55 0 0 0 3.6 -4.55 L3.6 -14.35 A2.05 2.05 0 0 0 -0.5 -14.35 L-0.5 -4.1" fill="none" stroke="#333" stroke-width="1.5" stroke-linecap="round"/>
</svg>
<svg class="a" style="left:1879px;top:496px" width="31" height="31" viewBox="0 0 31 31">
 <rect x="1.2" y="1.2" width="28.6" height="28.6" rx="4" fill="none" stroke="#fff" stroke-width="2.2"/>
 <path d="M17.5 7 H24 V13.5 M24 7 L16.5 14.5 M13.5 24 H7 V17.5 M7 24 L14.5 16.5" fill="none" stroke="#fff" stroke-width="2.2"/>
</svg>
</body></html>
